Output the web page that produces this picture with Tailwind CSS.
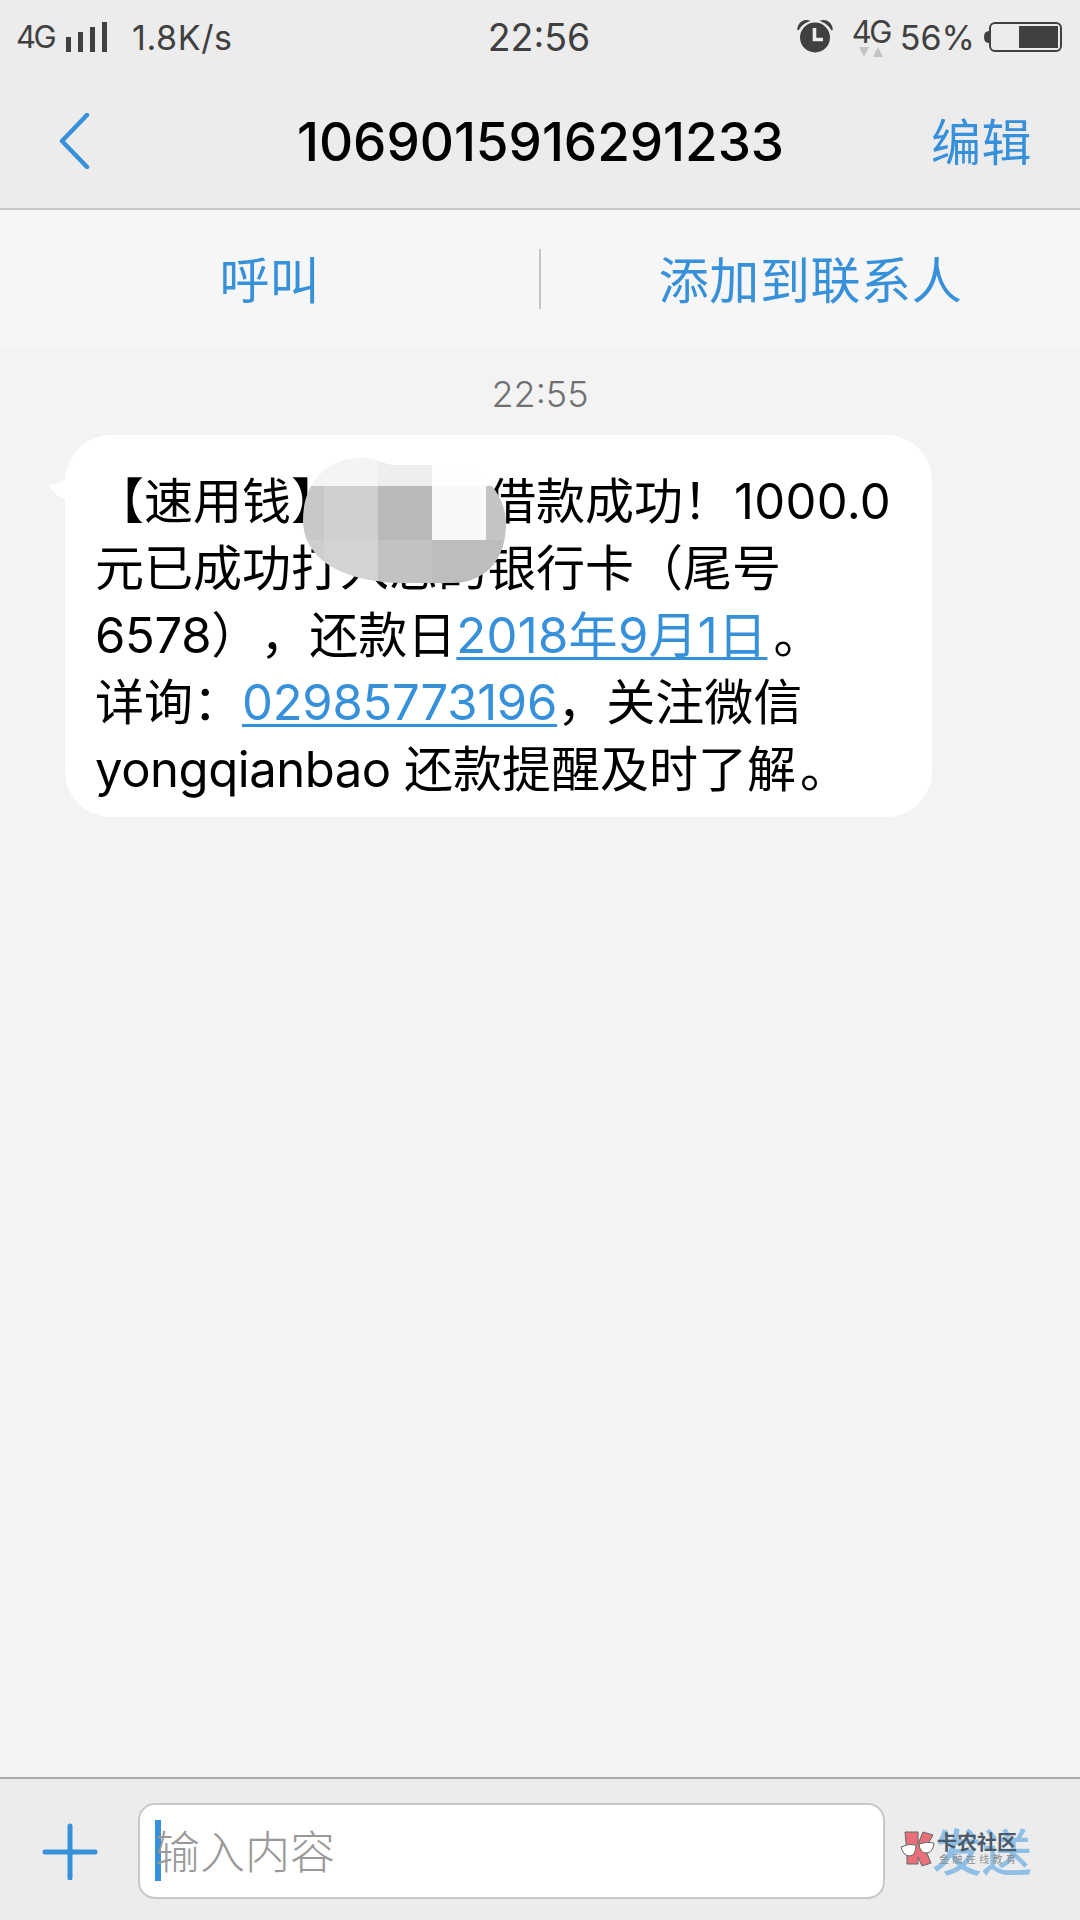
<!DOCTYPE html>
<html lang="zh-CN">

<head>
    <meta charset="UTF-8">
    <meta name="viewport" content="width=device-width, initial-scale=1.0">
    <title>1069015916291233</title>
    <script src="https://cdn.jsdelivr.net/npm/@tailwindcss/browser@4"></script>
</head>

<body class="w-[1080px] h-[1920px] overflow-hidden flex flex-col bg-[#f3f3f3] text-black font-[Inter,'Noto_Sans_CJK_SC',sans-serif] [text-spacing-trim:space-all]">
    <!-- Status bar -->
    <div class="h-[73px] shrink-0 bg-[#ececec] pl-4 pr-[18px] grid grid-cols-3 items-center text-[#404040] whitespace-nowrap">
        <div class="flex items-center">
            <span class="w-[40px] text-[31px] leading-9 tracking-[-2.5px]">4G</span>
            <svg class="ml-2 mr-6 w-[44px] h-[32px]" viewBox="0 0 44 32" fill="#404040">
                <rect x="2" y="16" width="5" height="15" />
                <rect x="14" y="11" width="5" height="20" />
                <rect x="26" y="6" width="5" height="25" />
                <rect x="38" y="1" width="5" height="30" />
            </svg>
            <span class="pt-[2px] text-[34px] leading-9 tracking-[0.6px]">1.8K/s</span>
        </div>
        <div class="pt-[2px] text-center text-[37.5px] leading-10">22:56</div>
        <div class="flex items-center justify-end">
            <svg class="w-[36px] h-[36px] mr-[18px]" viewBox="0 0 36 36">
                <circle cx="18" cy="18.5" r="15" fill="#404040" />
                <path d="M1 11C1 5 6 1 11 2Q4 5 1 11Z M35 11C35 5 30 1 25 2Q32 5 35 11Z" fill="#404040" stroke="#404040" stroke-width="1.5" />
                <path d="M17.5 9V20.5H26" fill="none" stroke="#ececec" stroke-width="3.6" />
            </svg>
            <div class="w-[40px] mr-[9px] flex flex-col items-center">
                <span class="text-[31px] leading-[30px] tracking-[-2.5px]">4G</span>
                <svg class="w-[26px] h-[10px]" viewBox="0 0 26 10" fill="#c4c4c4">
                    <path d="M1 0H11L6 10Z M20 0L25 10H15Z" />
                </svg>
            </div>
            <span class="pt-[2px] text-[34px] leading-9 mr-[9px]">56%</span>
            <svg class="w-[78px] h-[32px]" viewBox="0 0 78 32">
                <path d="M5 10Q0 10 0 16Q0 22 5 22Z" fill="#404040" />
                <rect x="6" y="2" width="71" height="28" rx="5" fill="none" stroke="#404040" stroke-width="2" />
                <rect x="35" y="5" width="39" height="22" fill="#404040" />
            </svg>
        </div>
    </div>

    <!-- Title bar -->
    <div class="h-[137px] shrink-0 bg-[#ececec] border-b-2 border-[#c6c6c6] flex items-center justify-between pl-[58px] pr-[48px]">
        <svg class="w-[92px] h-[56px]" viewBox="0 0 92 56" fill="none" stroke="#3690da" stroke-width="4.5" stroke-linecap="round" stroke-linejoin="round">
            <path d="M29 2L4 28L29 54" />
        </svg>
        <h1 class="pt-[2px] text-[53px] leading-[64px] font-medium tracking-[-0.05px]">1069015916291233</h1>
        <button class="pt-[4px] text-[50px] leading-[64px] tracking-[0.5px] text-[#3690da]">编辑</button>
    </div>

    <!-- Actions -->
    <div class="h-[138px] shrink-0 bg-[#f6f6f6] flex items-center text-[50px] leading-[64px] text-[#3690da]">
        <button class="w-[539px] pt-[4px] text-center">呼叫</button>
        <div class="w-[2px] h-[60px] bg-[#c4c4c4]"></div>
        <button class="flex-1 pt-[4px] text-center tracking-[0.6px]">添加到联系人</button>
    </div>

    <!-- Messages -->
    <div class="flex-1 bg-[#f3f3f3]">
        <div class="h-[87px] pt-[23px] text-center text-[36px] leading-[46px] font-light text-[#707070]">22:55</div>
        <div class="relative ml-[65px] w-[867px] h-[382px] rounded-[46px] bg-white pl-[30px] pt-[33px] text-[49px] leading-[67px] whitespace-nowrap">
            <svg class="absolute left-[-17px] top-[44px] w-[24px] h-[24px]" viewBox="0 0 24 24" fill="#ffffff">
                <path d="M0 5Q10 6 18 0H24V20H17Q6 17 0 5Z" />
            </svg>
            <p>【速用钱】<span class="inline-block w-[147px]"></span>借款成功！<span class="ml-[2px] tracking-[0.3px]">1000.0</span></p>
            <p>元已成功打入您的银行卡（尾号</p>
            <p><span class="tracking-[-0.3px]">6578</span>），还款日<a class="tracking-[0.3px] text-[#3690da] underline decoration-[3px] underline-offset-[4px] [text-decoration-skip-ink:none]">2018年9月1日</a><span class="ml-[6px]">。</span></p>
            <p>详询：<a class="tracking-[-0.25px] text-[#3690da] underline decoration-[3px] underline-offset-[4px] [text-decoration-skip-ink:none]">02985773196</a>，关注微信</p>
            <p><span class="tracking-[-0.45px]">yongqianbao </span>还款提醒及时了解<span class="ml-[4px]">。</span></p>

            <!-- Mosaic over the name -->
            <svg class="absolute left-[235px] top-[20px] w-[210px] h-[130px]" viewBox="300 455 210 130">
                <clipPath id="blob">
                    <path d="M303 520C303 482 328 458 360 458C378 458 382 464 394 465H445C480 465 506 492 506 524C506 560 485 583 452 583H405C345 583 303 560 303 520Z" />
                </clipPath>
                <g clip-path="url(#blob)">
                    <rect x="300" y="455" width="78" height="31" fill="#f4f4f4" />
                    <rect x="378" y="455" width="54" height="31" fill="#eeeeee" />
                    <rect x="432" y="455" width="78" height="31" fill="#fefefe" />
                    <rect x="300" y="486" width="24" height="54" fill="#c8c8c8" />
                    <rect x="324" y="486" width="54" height="54" fill="#d0d0d0" />
                    <rect x="378" y="486" width="54" height="54" fill="#b9b9b9" />
                    <rect x="432" y="486" width="54" height="54" fill="#f8f8f8" />
                    <rect x="486" y="486" width="24" height="54" fill="#c4c4c4" />
                    <rect x="300" y="540" width="24" height="45" fill="#cecece" />
                    <rect x="324" y="540" width="54" height="45" fill="#d3d3d3" />
                    <rect x="378" y="540" width="54" height="45" fill="#c2c2c2" />
                    <rect x="432" y="540" width="78" height="45" fill="#bdbdbd" />
                </g>
            </svg>
        </div>
    </div>

    <!-- Input bar -->
    <div class="h-[143px] shrink-0 bg-[#ececec] border-t-2 border-[#acacac] flex items-center pl-[42px] pr-[48px] pt-[2px]">
        <svg class="w-[56px] h-[58px]" viewBox="0 0 56 58" stroke="#3690da" stroke-width="5" stroke-linecap="round">
            <path d="M28 4V56M3 30H53" />
        </svg>
        <div class="ml-[40px] w-[747px] h-[96px] bg-white border-2 border-[#c8c8c8] rounded-[17px] flex items-center pl-[15px]">
            <div class="w-[6px] h-[61px] bg-[#3690da]"></div>
            <span class="-ml-[6px] pt-[4px] text-[45px] leading-[60px] font-light text-[#999999]">输入内容</span>
        </div>
        <div class="relative ml-auto">
            <button class="pt-[5px] text-[50px] leading-[64px] font-medium text-[#90bfe6]">发送</button>
            <div class="absolute left-[-32px] top-[15px] flex items-center whitespace-nowrap">
                <svg class="w-[35px] h-[36px]" viewBox="0 0 35 36" stroke="#666" stroke-width="1">
                    <path d="M5 1H18V13L23 1L33 4L25 18L31 32L22 35L18 26V33H7V22Z" fill="#e8707b" />
                    <path d="M1 16Q8 12 16 14Q16 25 9 25Q3 24 1 16Z M19 13Q27 10 34 12Q33 22 26 22Q20 22 19 13Z" fill="#fff" />
                </svg>
                <div class="ml-[2px]">
                    <div class="text-[20px] leading-[20px] font-bold text-[#4a5a68]">卡农社区</div>
                    <div class="pl-[2px] text-[10px] leading-[13px] tracking-[3.4px] text-[#8b8f93]">金融在线教育</div>
                </div>
            </div>
        </div>
    </div>
</body>
</html>
